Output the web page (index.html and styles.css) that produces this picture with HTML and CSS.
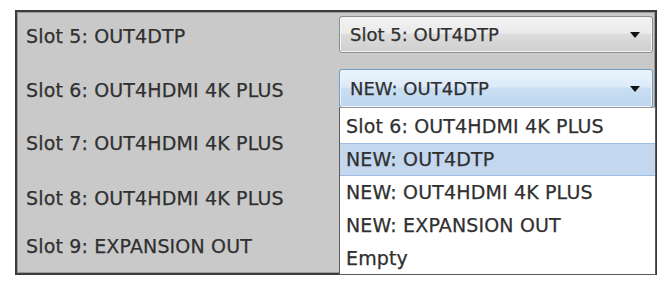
FILE: index.html
```html
<!DOCTYPE html>
<html>
<head>
<meta charset="utf-8">
<link rel="stylesheet" href="styles.css">
</head>
<body>
<div class="frame">
  <div class="labels">
    <div class="label">Slot 5: OUT4DTP</div>
    <div class="label">Slot 6: OUT4HDMI 4K PLUS</div>
    <div class="label">Slot 7: OUT4HDMI 4K PLUS</div>
    <div class="label">Slot 8: OUT4HDMI 4K PLUS</div>
    <div class="label">Slot 9: EXPANSION OUT</div>
  </div>
  <div class="controls">
    <div class="select">
      <span class="value">Slot 5: OUT4DTP</span>
      <span class="arrow"></span>
    </div>
    <div class="select open">
      <span class="value">NEW: OUT4DTP</span>
      <span class="arrow"></span>
    </div>
  </div>
  <ul class="list">
    <li class="item">Slot 6: OUT4HDMI 4K PLUS</li>
    <li class="item selected">NEW: OUT4DTP</li>
    <li class="item">NEW: OUT4HDMI 4K PLUS</li>
    <li class="item">NEW: EXPANSION OUT</li>
    <li class="item">Empty</li>
  </ul>
</div>
</body>
</html>
```
FILE: styles.css
```css
html, body {
  margin: 0;
  padding: 0;
  background: #ffffff;
}
body {
  font-family: "DejaVu Sans", Verdana, sans-serif;
  color: #303030;
  -webkit-text-stroke: 0.25px #303030;
}
.frame {
  position: relative;
  box-sizing: border-box;
  margin: 10px 0 0 15px;
  width: 642px;
  height: 265px;
  border: 2px solid #3c3c3c;
  box-shadow: inset 0 0 0 1px #9a9a9a;
  background: #c9c9c9;
  display: flex;
}
.labels {
  width: 322px;
  display: flex;
  flex-direction: column;
  gap: 33px;
  padding: 14px 0 0 9px;
  box-sizing: border-box;
}
.label {
  font-size: 19px;
  line-height: 20px;
  letter-spacing: 0.15px;
  white-space: nowrap;
}
.label:nth-child(2) { margin-top: 1px; }
.label:nth-child(4) { margin-top: 2px; }
.label:nth-child(5) { margin-top: -5px; }
.controls {
  display: flex;
  flex-direction: column;
  gap: 16px;
  padding-top: 4px;
}
.select {
  box-sizing: border-box;
  width: 314px;
  height: 37px;
  border: 1px solid #8e8e8e;
  border-radius: 3px;
  box-shadow: inset 0 0 0 1px #f4f4f4;
  background: linear-gradient(#f2f2f2, #ebebeb 45%, #dcdcdc 50%, #cfcfcf);
  display: flex;
  align-items: center;
  justify-content: space-between;
  padding: 0 12px 0 10px;
}
.select .value {
  font-size: 18px;
  white-space: nowrap;
}
.select.open {
  height: 39px;
  border-color: #6f9bcb;
  box-shadow: inset 0 0 0 1px #eef5fc;
  background: linear-gradient(#eaf3fc, #dcebf9 45%, #c9def3 50%, #bdd6ef);
}
.arrow {
  width: 0;
  height: 0;
  border-left: 5px solid transparent;
  border-right: 5px solid transparent;
  border-top: 6px solid #111111;
}
.list {
  position: absolute;
  left: 322px;
  top: 95px;
  width: 317px;
  height: 168px;
  margin: 0;
  padding: 2px 0 0 0;
  box-sizing: border-box;
  list-style: none;
  background: #ffffff;
  border: 1px solid #5a5a5a;
  border-top: 1px solid #9a9a9a;
}
.item {
  height: 33px;
  line-height: 33px;
  padding-left: 6px;
  font-size: 19px;
  letter-spacing: 0.15px;
  white-space: nowrap;
  box-sizing: border-box;
}
.item.selected {
  background: #c3d7ee;
  border-top: 1px solid #9fbde0;
  border-bottom: 1px solid #9fbde0;
  line-height: 31px;
}
```
